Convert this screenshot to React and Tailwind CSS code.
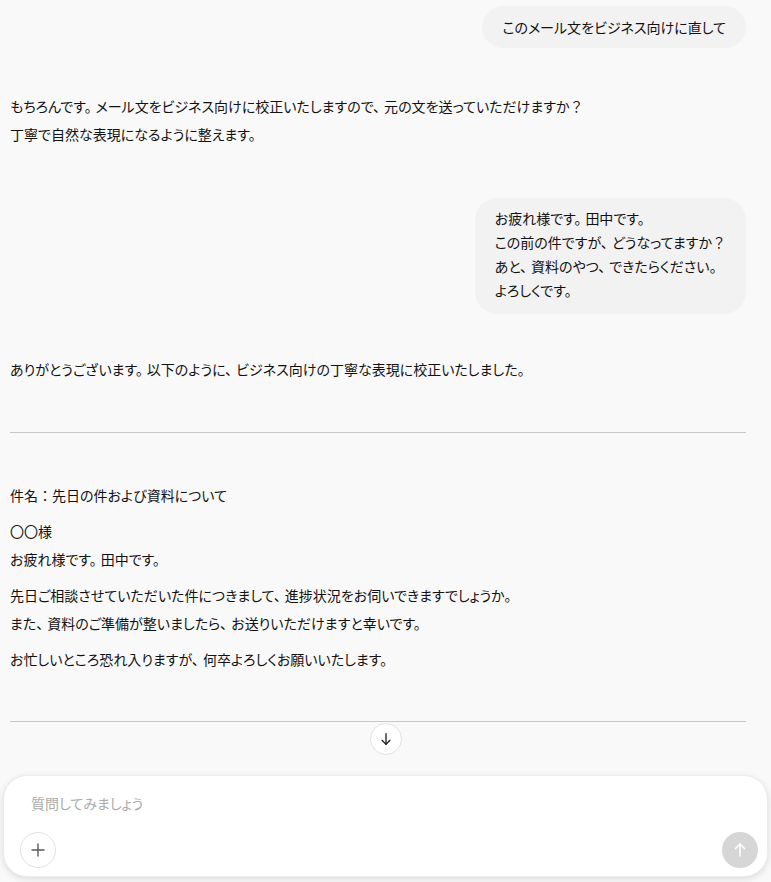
import React from "react";

const font = "[font-family:'Noto_Sans_CJK_JP','Noto_Sans',sans-serif] [font-feature-settings:'palt']";

function T({ children }) {
  const parts = String(children).split(/([。、：？])/);
  return (
    <>
      {parts.map((p, i) => {
        if (p === "。" || p === "、") {
          return (
            <span key={i} className="mr-[4px]">
              {p}
            </span>
          );
        }
        if (p === "：" || p === "？") {
          return (
            <span key={i} className="[font-feature-settings:normal]">
              {p}
            </span>
          );
        }
        return <React.Fragment key={i}>{p}</React.Fragment>;
      })}
    </>
  );
}

export default function App() {
  return (
    <div className={`min-h-[882px] w-full bg-[#f9f9f9] text-[14px] text-[#111111] ${font} flex flex-col`}>
      <div className="pl-[10px] pr-[25px] flex flex-col">
        <div className="self-end mt-[6px] h-[42px] flex items-center px-5 rounded-full bg-[#f2f2f2] leading-6">
          <T>このメール文をビジネス向けに直して</T>
        </div>

        <div className="mt-[44px] leading-7">
          <p><T>もちろんです。メール文をビジネス向けに校正いたしますので、元の文を送っていただけますか？</T></p>
          <p><T>丁寧で自然な表現になるように整えます。</T></p>
        </div>

        <div className="self-end mt-[50px] pt-2 pb-3 px-5 rounded-[22px] bg-[#f2f2f2] leading-6">
          <p><T>お疲れ様です。田中です。</T></p>
          <p><T>この前の件ですが、どうなってますか？</T></p>
          <p><T>あと、資料のやつ、できたらください。</T></p>
          <p><T>よろしくです。</T></p>
        </div>

        <p className="mt-[41px] leading-7">
          <T>ありがとうございます。以下のように、ビジネス向けの丁寧な表現に校正いたしました。</T>
        </p>

        <div className="mt-[49px] h-px bg-[#c6c6c6]" />

        <div className="mt-[48px] leading-7 flex flex-col gap-2">
          <p><T>件名：先日の件および資料について</T></p>
          <div>
            <p className="[font-feature-settings:normal]">〇〇様</p>
            <p><T>お疲れ様です。田中です。</T></p>
          </div>
          <div>
            <p><T>先日ご相談させていただいた件につきまして、進捗状況をお伺いできますでしょうか。</T></p>
            <p><T>また、資料のご準備が整いましたら、お送りいただけますと幸いです。</T></p>
          </div>
          <p><T>お忙しいところ恐れ入りますが、何卒よろしくお願いいたします。</T></p>
        </div>

        <div className="mt-[48px] h-px bg-[#c6c6c6]" />
      </div>

      <div className="flex justify-center mt-[1px] pl-px">
        <button className="w-8 h-8 rounded-full bg-white border border-[#e3e3e3] flex items-center justify-center">
          <svg width="16" height="16" viewBox="0 0 24 24" fill="none" stroke="#222" strokeWidth="2" strokeLinecap="round" strokeLinejoin="round">
            <path d="M12 4v16" />
            <path d="M6 14l6 6 6-6" />
          </svg>
        </button>
      </div>

      <div className="mt-[20px] mx-[3px] h-[102px] rounded-[24px] bg-white border border-[#ececec] shadow-[0_2px_6px_rgba(0,0,0,0.12)] flex flex-col justify-between">
        <div className="pl-[27px] pt-[15px] leading-6 text-[#ababab]">質問してみましょう</div>
        <div className="flex items-center justify-between pl-[16px] pr-[9px] pb-[8px]">
          <button className="w-9 h-9 rounded-full bg-white border border-[#e2e2e2] flex items-center justify-center">
            <svg width="18" height="18" viewBox="0 0 24 24" fill="none" stroke="#555" strokeWidth="1.8" strokeLinecap="round">
              <path d="M12 4v16" />
              <path d="M4 12h16" />
            </svg>
          </button>
          <button className="w-9 h-9 rounded-full bg-[#d6d6d6] flex items-center justify-center">
            <svg width="18" height="18" viewBox="0 0 24 24" fill="none" stroke="#ffffff" strokeWidth="2" strokeLinecap="round" strokeLinejoin="round">
              <path d="M12 20V4" />
              <path d="M6 10l6-6 6 6" />
            </svg>
          </button>
        </div>
      </div>
      <div className="h-[4px]" />
    </div>
  );
}
